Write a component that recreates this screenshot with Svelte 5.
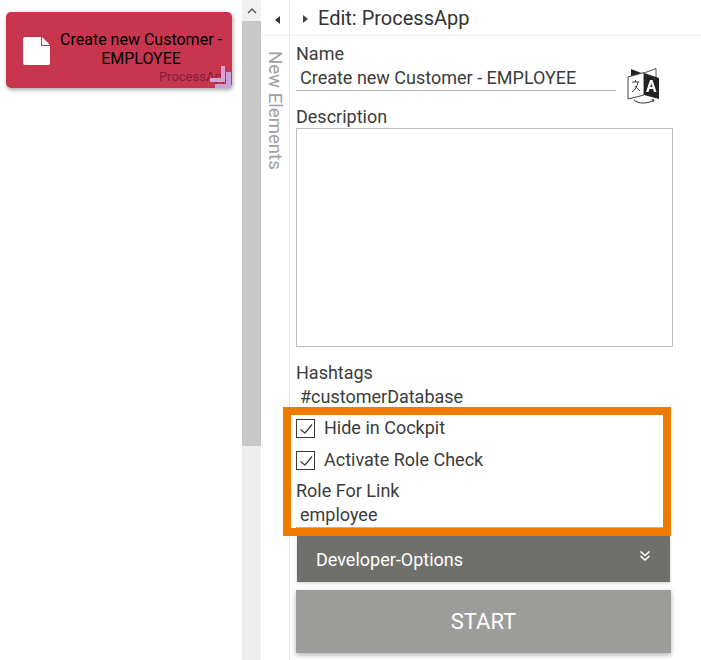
<script lang="ts">
  const checks = ['Hide in Cockpit', 'Activate Role Check'];
</script>

<div class="app">
  <aside class="elements">
    <div class="card">
      <svg class="doc" viewBox="0 0 27 28" aria-hidden="true">
        <path d="M2 0H18V9H27V26a2 2 0 0 1-2 2H2a2 2 0 0 1-2-2V2a2 2 0 0 1 2-2Z" fill="#fff" />
        <path d="M19 0L27 8H19Z" fill="#fff" />
        <path d="M18.5 1V8.5H26" fill="none" stroke="#c8354f" stroke-width="1" />
      </svg>
      <div class="card-title">Create new Customer - EMPLOYEE</div>
      <div class="card-type">ProcessApp</div>
      <svg class="resize" viewBox="0 0 22 22" aria-hidden="true">
        <path d="M0 12H11V0H15V16H0Z" fill="#d9a3cf" />
        <path d="M5 18H16V6H21V22H5Z" fill="#c9a0d8" />
      </svg>
    </div>
  </aside>

  <div class="scrollbar">
    <div class="scroll-btn">
      <svg viewBox="0 0 10 6" aria-hidden="true"><path d="M1 5L5 1L9 5" fill="none" stroke="#505050" stroke-width="1.4" /></svg>
    </div>
    <div class="scroll-thumb"></div>
  </div>

  <div class="strip">
    <div class="strip-head"><span class="arrow-left"></span></div>
    <div class="strip-label">New Elements</div>
  </div>

  <main class="editor">
    <header class="editor-head">
      <span class="arrow-right"></span>
      <h1>Edit: ProcessApp</h1>
    </header>

    <div class="form">
      <div class="label name-label">Name</div>
      <div class="name-row">
        <div class="value underlined">Create new Customer - EMPLOYEE</div>
        <svg class="translate" viewBox="0 0 33 37" aria-hidden="true">
          <path d="M4 2L17 7L4 9Z" fill="#222" />
          <path d="M17 6L29 1.5V10" fill="none" stroke="#555" stroke-width="1" />
          <path d="M1 10L17 5.5V28L1 32Z" fill="#fff" stroke="#444" stroke-width="1" />
          <path d="M17 6L32 11V32L17 28Z" fill="#222" />
          <path d="M19 25L23 13H25.5L29.5 25H27L26 22H22.5L21.5 25ZM23.2 20H25.3L24.2 16Z" fill="#fff" />
          <path d="M5 15H12M8.5 13V15M11 15C10 20 8 23 5 25M8 19L13 24" fill="none" stroke="#444" stroke-width="1" />
          <path d="M7 33C11 37 21 37 27 33M27 33L24.5 32.5M27 33L26 35" fill="none" stroke="#333" stroke-width="1" />
        </svg>
      </div>

      <div class="label desc-label">Description</div>
      <div class="textarea"></div>

      <div class="label tags-label">Hashtags</div>
      <div class="value tags">#customerDatabase</div>

      <div class="checks">
        {#each checks as text}
          <div class="check">
            <span class="box">
              <svg viewBox="0 0 17 17" aria-hidden="true"><path d="M3.5 9.5L8 13L15 4.5" fill="none" stroke="#444" stroke-width="1.3" /></svg>
            </span>
            <span class="check-text">{text}</span>
          </div>
        {/each}
      </div>

      <div class="label role-label">Role For Link</div>
      <div class="value role">employee</div>

      <div class="dev">
        <span>Developer-Options</span>
        <svg viewBox="0 0 12 12" aria-hidden="true">
          <path d="M1.5 1.5L6 5.5L10.5 1.5M1.5 6L6 10L10.5 6" fill="none" stroke="#fff" stroke-width="1.6" />
        </svg>
      </div>

      <button class="start" type="button">START</button>
    </div>

    <div class="highlight"></div>
  </main>
</div>

<style>
  :global(body) {
    margin: 0;
    background: #fff;
  }

  .app {
    display: flex;
    width: 701px;
    height: 660px;
    overflow: hidden;
    font-family: Roboto, "Liberation Sans", sans-serif;
    color: #3c3c3c;
    position: relative;
  }

  .elements {
    flex: none;
    width: 242px;
    box-sizing: border-box;
    padding: 12px 10px 0 6px;
  }

  .card {
    position: relative;
    display: flex;
    align-items: center;
    box-sizing: border-box;
    height: 76px;
    padding: 0 8px 0 17px;
    border-radius: 5px;
    background: #c8354f;
    box-shadow: 1px 2px 4px rgba(0, 0, 0, 0.35);
  }

  .doc {
    flex: none;
    width: 27px;
    height: 28px;
    margin-top: 1px;
  }

  .card-title {
    flex: 1;
    margin: -3px 0 0 8px;
    color: #000;
    font-size: 16px;
    line-height: 19px;
    text-align: center;
  }

  .card-type {
    position: absolute;
    right: 3px;
    bottom: 3px;
    color: #7d2238;
    font-size: 13px;
    line-height: 16px;
    white-space: nowrap;
  }

  .resize {
    position: absolute;
    right: 0;
    bottom: 0;
    width: 22px;
    height: 22px;
  }

  .scrollbar {
    flex: none;
    width: 19px;
    background: #eee;
  }

  .scroll-btn {
    display: flex;
    align-items: center;
    justify-content: center;
    height: 21px;
    background: #f1f1f1;
  }

  .scroll-btn svg {
    width: 10px;
    height: 6px;
  }

  .scroll-thumb {
    height: 425px;
    background: #c8c8c8;
  }

  .strip {
    flex: none;
    width: 28px;
    border-right: 1px solid #e6e6e6;
  }

  .strip-head {
    display: flex;
    align-items: center;
    justify-content: center;
    height: 35px;
    border-bottom: 1px solid #eee;
  }

  .arrow-left {
    width: 0;
    height: 0;
    border-top: 4.5px solid transparent;
    border-bottom: 4.5px solid transparent;
    border-right: 5px solid #333;
    margin: 5px 0 0 4px;
  }

  .strip-label {
    margin: 15px 0 0 4px;
    writing-mode: vertical-rl;
    color: #a0a0a0;
    font-size: 18.6px;
    line-height: 20px;
    white-space: nowrap;
  }

  .editor {
    flex: 1;
    min-width: 0;
  }

  .editor-head {
    display: flex;
    align-items: center;
    height: 35px;
    padding-left: 13px;
    border-bottom: 1px solid #eee;
  }

  .arrow-right {
    width: 0;
    height: 0;
    border-top: 4px solid transparent;
    border-bottom: 4px solid transparent;
    border-left: 5px solid #444;
    margin: 3px 10px 0 0;
  }

  h1 {
    margin: 1px 0 0;
    color: #333;
    font-size: 20px;
    font-weight: 400;
    line-height: 24px;
  }

  .form {
    padding-left: 6px;
    width: 377px;
  }

  .label {
    font-size: 18px;
    line-height: 20px;
  }

  .value {
    padding-left: 4px;
    font-size: 18px;
    line-height: 20px;
  }

  .name-label {
    margin-top: 8px;
  }

  .name-row {
    position: relative;
    height: 39px;
    margin-top: 4px;
  }

  .underlined {
    box-sizing: border-box;
    width: 320px;
    height: 23px;
    border-bottom: 1px solid #b4b4b4;
  }

  .translate {
    position: absolute;
    left: 331px;
    top: -1px;
    width: 33px;
    height: 37px;
  }

  .desc-label {
    line-height: 19px;
  }

  .textarea {
    box-sizing: border-box;
    height: 219px;
    margin-top: 2px;
    border: 1px solid #bdbdbd;
  }

  .tags-label {
    margin-top: 16px;
  }

  .tags {
    margin-top: 4px;
  }

  .checks {
    display: flex;
    flex-direction: column;
    gap: 12px;
    margin-top: 11px;
  }

  .check {
    display: flex;
    align-items: center;
    height: 20px;
  }

  .box {
    display: block;
    box-sizing: border-box;
    width: 19px;
    height: 19px;
    margin-top: 1px;
    border: 1px solid #3a3a3a;
  }

  .box svg {
    display: block;
    width: 17px;
    height: 17px;
  }

  .check-text {
    margin-left: 9px;
    margin-top: -1px;
    font-size: 18px;
    line-height: 20px;
  }

  .role-label {
    margin-top: 11px;
  }

  .role {
    box-sizing: border-box;
    width: 375px;
    height: 23px;
    margin-top: 4px;
    border-bottom: 1px solid #b4b4b4;
  }

  .dev {
    display: flex;
    align-items: center;
    justify-content: space-between;
    box-sizing: border-box;
    width: 373px;
    height: 46px;
    margin: 8px 0 0 1px;
    padding: 0 19px;
    background: #6f706c;
    color: #fff;
    font-size: 18px;
    box-shadow: 0 1px 3px rgba(0, 0, 0, 0.2);
  }

  .dev svg {
    width: 12px;
    height: 12px;
    margin-top: -7px;
  }

  .start {
    display: block;
    width: 375px;
    height: 63px;
    margin-top: 8px;
    padding: 0;
    border: 0;
    background: #9c9c9a;
    color: #fff;
    font: inherit;
    font-size: 22px;
    box-shadow: 0 2px 5px rgba(0, 0, 0, 0.3);
  }

  /* orange annotation drawn over the screenshot */
  .highlight {
    position: absolute;
    left: 283px;
    top: 407px;
    box-sizing: border-box;
    width: 388px;
    height: 129px;
    border: 8px solid #f07a00;
  }
</style>
